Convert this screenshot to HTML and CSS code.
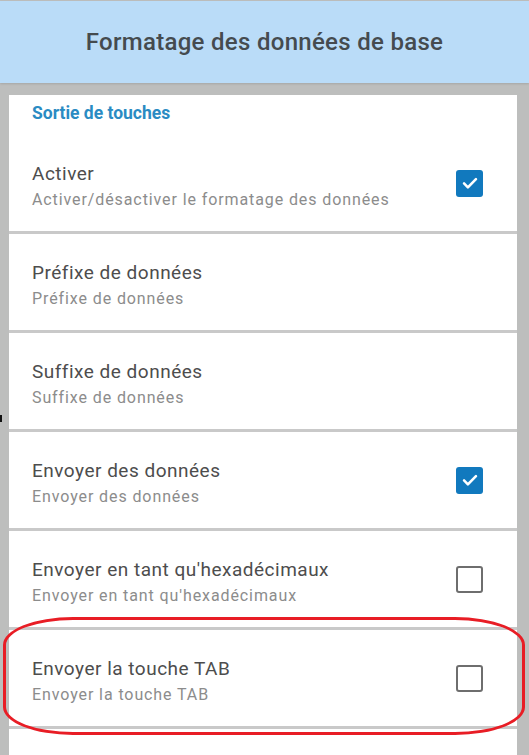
FILE: index.html
```html
<!DOCTYPE html>
<html lang="fr">
<head>
<meta charset="utf-8">
<title>Formatage des données de base</title>
<link rel="stylesheet" href="styles.css">
</head>
<body>
<header class="appbar">
  <h1 class="appbar-title">Formatage des données de base</h1>
</header>
<main class="content">
  <section class="card">
    <div class="section-title">Sortie de touches</div>
    <div class="row">
      <div class="texts">
        <div class="title">Activer</div>
        <div class="summary">Activer/désactiver le formatage des données</div>
      </div>
      <span class="check checked"><svg viewBox="0 0 24 24" width="22" height="22"><path d="M5.5 12.5l4.2 4.2 8.8-9" fill="none" stroke="#fff" stroke-width="2.8" stroke-linecap="round" stroke-linejoin="round"/></svg></span>
    </div>
    <div class="row">
      <div class="texts">
        <div class="title">Préfixe de données</div>
        <div class="summary">Préfixe de données</div>
      </div>
    </div>
    <div class="row">
      <div class="texts">
        <div class="title">Suffixe de données</div>
        <div class="summary">Suffixe de données</div>
      </div>
    </div>
    <div class="row">
      <div class="texts">
        <div class="title">Envoyer des données</div>
        <div class="summary">Envoyer des données</div>
      </div>
      <span class="check checked"><svg viewBox="0 0 24 24" width="22" height="22"><path d="M5.5 12.5l4.2 4.2 8.8-9" fill="none" stroke="#fff" stroke-width="2.8" stroke-linecap="round" stroke-linejoin="round"/></svg></span>
    </div>
    <div class="row">
      <div class="texts">
        <div class="title">Envoyer en tant qu'hexadécimaux</div>
        <div class="summary">Envoyer en tant qu'hexadécimaux</div>
      </div>
      <span class="check"></span>
    </div>
    <div class="row">
      <div class="texts">
        <div class="title">Envoyer la touche TAB</div>
        <div class="summary">Envoyer la touche TAB</div>
      </div>
      <span class="check"></span>
    </div>
    <div class="row-partial"></div>
  </section>
</main>
<div class="highlight"></div>
<span class="edge-mark"></span>
</body>
</html>
```
FILE: styles.css
```css
html, body {
  margin: 0;
  padding: 0;
}
body {
  width: 529px;
  height: 755px;
  overflow: hidden;
  background: #bdbebd;
  font-family: Roboto, "Noto Sans", "Liberation Sans", sans-serif;
  position: relative;
}
.appbar {
  height: 82px;
  margin-top: 1px;
  background: #badcf8;
  display: flex;
  align-items: center;
  justify-content: center;
  box-shadow: 0 1px 2px rgba(0,0,0,0.12);
}
.appbar-title {
  margin: 0;
  font-size: 24px;
  font-weight: 500;
  color: #454b4f;
  letter-spacing: 0.3px;
}
.content {
  padding: 12px 12px 0 9px;
}
.card {
  background: #fff;
}
.section-title {
  height: 40px;
  box-sizing: border-box;
  padding: 8px 0 0 23px;
  font-size: 17.5px;
  font-weight: 700;
  color: #2a8bc3;
}
.row {
  height: 96px;
  border-bottom: 3px solid #c9c9c9;
  display: flex;
  align-items: center;
  padding: 0 34px 0 23px;
}
.row-partial {
  height: 26px;
}
.texts {
  flex: 1;
  display: flex;
  flex-direction: column;
  padding-top: 7px;
}
.title {
  font-size: 19px;
  line-height: 26px;
  color: #4d4d4d;
  letter-spacing: 0.5px;
}
.summary {
  font-size: 16px;
  line-height: 26px;
  color: #8c8c8c;
  letter-spacing: 0.9px;
}
.check {
  width: 27px;
  height: 27px;
  box-sizing: border-box;
  border: 2.5px solid #6e6e6e;
  border-radius: 3px;
  display: flex;
  align-items: center;
  justify-content: center;
}
.check.checked {
  border: none;
  background: #1179be;
}
.highlight {
  position: absolute;
  left: 3px;
  top: 617px;
  width: 522px;
  height: 118px;
  box-sizing: border-box;
  border: 3px solid #e81d25;
  border-radius: 70px / 28px;
}
.edge-mark {
  position: absolute;
  left: 0;
  top: 415px;
  width: 2px;
  height: 7px;
  background: #111;
}
```
